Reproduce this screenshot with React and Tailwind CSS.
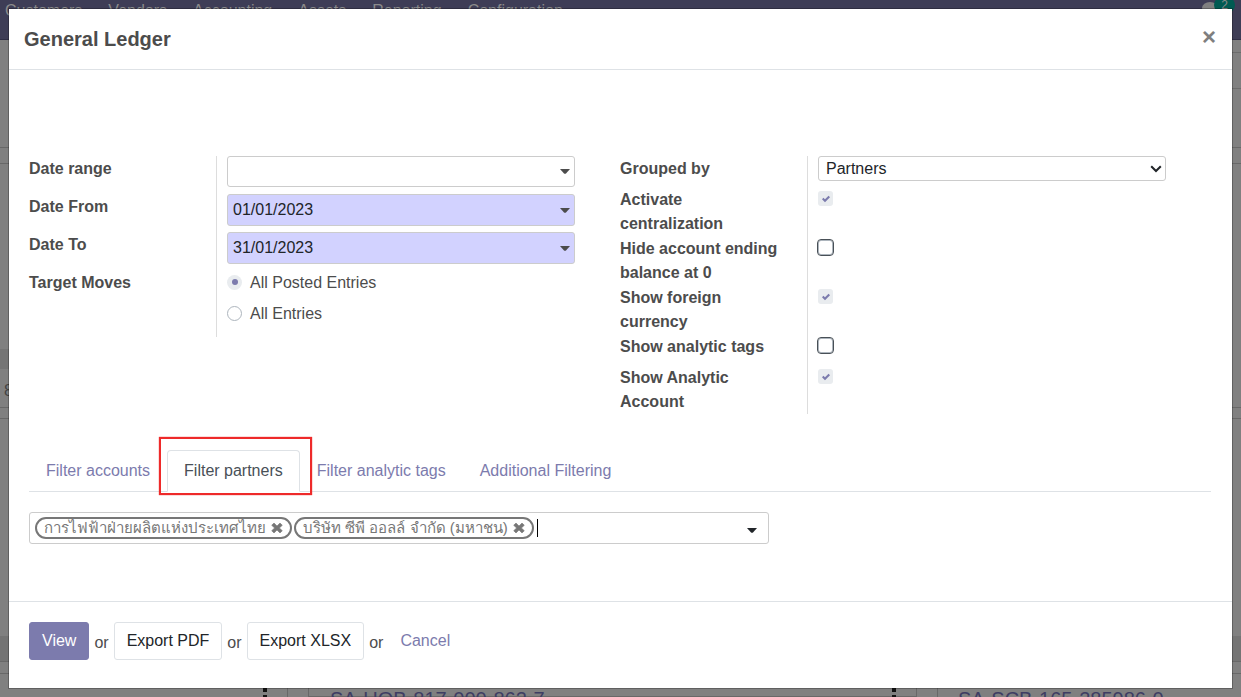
import React from "react";

const NAV = ["Customers", "Vendors", "Accounting", "Assets", "Reporting", "Configuration"];

const OPTIONS = [
  { id: "centralize", label: "Activate centralization", checked: true },
  { id: "hide-zero", label: "Hide account ending balance at 0", checked: false },
  { id: "foreign", label: "Show foreign currency", checked: true },
  { id: "tags", label: "Show analytic tags", checked: false },
  { id: "analytic", label: "Show Analytic Account", checked: true },
];

const TABS = ["Filter accounts", "Filter partners", "Filter analytic tags", "Additional Filtering"];

const PARTNERS = ["การไฟฟ้าฝ่ายผลิตแห่งประเทศไทย", "บริษัท ซีพี ออลล์ จำกัด (มหาชน)"];

function Caret({ className = "" }) {
  return (
    <svg viewBox="0 0 10 5" className={"h-[5px] w-[10px] shrink-0 " + className} aria-hidden="true">
      <path d="M0 0h10L6 4.4Q5 5 4 4.4z" fill="currentColor" />
    </svg>
  );
}

function Cross({ className = "" }) {
  return (
    <svg viewBox="0 0 12 12" className={"h-3 w-3 " + className} aria-hidden="true">
      <path
        d="M3 1 6 4 9 1 11.3 3.3 8.4 6l2.9 2.7L9 11 6 8 3 11 .7 8.7 3.6 6 .7 3.3z"
        fill="currentColor"
        stroke="currentColor"
        strokeWidth="0.6"
        strokeLinejoin="round"
      />
    </svg>
  );
}

function DateField({ id, label, value, required }) {
  return (
    <div className="flex h-[38px]">
      <div className="w-[187px] shrink-0 pt-px">
        <label htmlFor={id} className="font-bold leading-6">{label}</label>
      </div>
      <div className="flex-1 border-l border-[#ddd] pl-[10px]">
        <div
          className={
            "flex items-center rounded-[3px] border border-[#ccc] pr-1 " +
            (required ? "h-8 bg-[#d2d2ff]" : "h-[31px] bg-white")
          }
        >
          <input
            id={id}
            type="text"
            defaultValue={value}
            className="min-w-0 flex-1 bg-transparent px-[5px] text-[#212529] outline-none"
          />
          <Caret />
        </div>
      </div>
    </div>
  );
}

function Check({ id, checked }) {
  return (
    <span className="grid w-[15px] place-items-center pt-1">
      <input
        id={id}
        type="checkbox"
        defaultChecked={checked}
        className={
          "col-start-1 row-start-1 appearance-none " +
          (checked
            ? "h-[15px] w-[15px] rounded-[3px] bg-[#e9ecef]"
            : "-m-px h-[17px] w-[17px] rounded-[4px] border border-[#495057] bg-white shadow-[inset_0_0_0_1px_#adb5bd]")
        }
      />
      {checked && (
        <svg viewBox="0 0 8 8" className="pointer-events-none col-start-1 row-start-1 h-2 w-2" aria-hidden="true">
          <path d="M6.564.75l-3.59 3.612-1.538-1.55L0 4.26 2.974 7.25 8 2.193z" fill="#7c7bad" />
        </svg>
      )}
    </span>
  );
}

function Radio({ id, label, checked }) {
  return (
    <div className="flex h-6 items-center gap-2">
      <span className="grid place-items-center">
        <input
          id={id}
          type="radio"
          name="target"
          defaultChecked={checked}
          className={
            "col-start-1 row-start-1 h-[15px] w-[15px] appearance-none rounded-full " +
            (checked ? "bg-[#e9ecef]" : "border border-[#adb5bd] bg-white")
          }
        />
        {checked && <span className="pointer-events-none col-start-1 row-start-1 h-[6px] w-[6px] rounded-full bg-[#7c7bad]" />}
      </span>
      <label htmlFor={id} className="pt-px">{label}</label>
    </div>
  );
}

function Dots() {
  return (
    <svg viewBox="0 0 4 18" className="h-[18px] w-1 text-[#111]" aria-hidden="true">
      <path d="M0 0h4v4H0zM0 7h4v4H0zM0 14h4v4H0z" fill="currentColor" />
    </svg>
  );
}

function Backdrop() {
  return (
    <div className="flex h-full flex-col overflow-hidden bg-[#808080]" aria-hidden="true">
      <div className="flex h-10 shrink-0 justify-between border-b border-[#2f2e45] bg-[#3e3d56] pl-[5px] pr-[6px] text-[#8b8b8b]">
        <div className="flex h-[22px] items-center gap-[26px]">
          {NAV.map((n) => (
            <span key={n}>{n}</span>
          ))}
        </div>
        <div className="flex items-start">
          <span className="mt-[2px] h-3 w-4 rounded-[50%] bg-[#808080]" />
          <span className="-ml-1 h-4 w-[21px] -translate-y-[3px] rounded-full bg-[#005a52] text-center text-xs leading-4">2</span>
        </div>
      </div>
      <div className="ml-3 h-[13px] shrink-0 border-b border-[#6c6c6c]" />
      <div className="ml-3 h-9 shrink-0 border-b border-[#6c6c6c]" />
      <div className="h-[59px] shrink-0 border-b border-[#686868]" />
      <div className="h-4 shrink-0 border-b border-[#686868]" />
      <div className="flex h-[244px] shrink-0 flex-col justify-end border-b border-[#686868]">
        <div className="h-5 w-3 bg-[#757575]" />
        <div className="flex h-[38px] items-center pl-1 pt-[5px] text-[#444]">8</div>
      </div>
      <div className="h-[11px] shrink-0 border-b border-[#686868]" />
      <div className="flex h-[243px] shrink-0 flex-col justify-end border-b border-[#686868]">
        <div className="h-[25px] bg-[#747474]" />
      </div>
      <div className="flex min-h-0 flex-1 gap-5 pt-[11px] text-xl text-[#3e3d63]">
        <div className="flex w-[288px] shrink-0 justify-end border-r border-t border-[#686868] pr-5 pt-[14px]">
          <Dots />
        </div>
        <div className="flex w-[609px] shrink-0 justify-between border border-[#686868] pl-[21px] pr-5 pt-[14px]">
          <span className="-mt-[3px]">SA-UOB-817-000-862-7</span>
          <Dots />
        </div>
        <div className="flex-1 whitespace-nowrap border-l border-t border-[#686868] pl-5 pt-[11px]">
          SA-SCB-165-285986-0
        </div>
      </div>
    </div>
  );
}

export default function App() {
  return (
    <div className="relative min-h-screen overflow-hidden font-['Liberation_Sans','Noto_Sans',sans-serif] text-base leading-6 text-[#4c4c4c]">
      <div className="absolute inset-0">
        <Backdrop />
      </div>

      <div className="relative p-[9px]">
        <section
          role="dialog"
          aria-labelledby="title"
          className="bg-white shadow-[0_0_0_1px_rgba(0,0,0,0.25)]"
        >
          <header className="flex h-[61px] items-center justify-between border-b border-[#dee2e6] px-[15px]">
            <h1 id="title" className="text-xl font-bold">General Ledger</h1>
            <button type="button" aria-label="Close" className="mb-1 mr-px text-[24px] font-bold text-[#7f7f7f]">
              ×
            </button>
          </header>

          <div className="pb-[57px] pl-5 pr-[21px] pt-[86px]">
            <div className="grid grid-cols-2 items-start">
              <div className="pr-[45px]">
                <DateField id="range" label="Date range" value="" />
                <DateField id="from" label="Date From" value="01/01/2023" required />
                <DateField id="to" label="Date To" value="31/01/2023" required />
                <div className="flex">
                  <div className="w-[187px] shrink-0 pt-px font-bold">Target Moves</div>
                  <div className="flex flex-1 flex-col gap-[7px] border-l border-[#ddd] pb-3 pl-[10px]">
                    <Radio id="posted" label="All Posted Entries" checked />
                    <Radio id="all" label="All Entries" />
                  </div>
                </div>
              </div>

              <div className="pr-[45px]">
                <div className="flex h-[31px]">
                  <div className="w-[187px] shrink-0 pt-px">
                    <label htmlFor="group" className="font-bold">Grouped by</label>
                  </div>
                  <div className="flex-1 border-l border-[#ddd] pl-[10px]">
                    <div className="grid items-center">
                      <select
                        id="group"
                        className="col-start-1 row-start-1 h-[25px] w-full appearance-none rounded-[3px] border border-[#ccc] bg-white pl-[7px] text-[#212529]"
                      >
                        <option>Partners</option>
                      </select>
                      <svg
                        viewBox="0 0 12 8"
                        className="pointer-events-none col-start-1 row-start-1 mr-1 h-2 w-3 justify-self-end"
                        aria-hidden="true"
                      >
                        <path d="M1.2 1.2 6 6l4.8-4.8" fill="none" stroke="#212529" strokeWidth="2" />
                      </svg>
                    </div>
                  </div>
                </div>
                {OPTIONS.map((o) => (
                  <div key={o.id} className="flex min-h-[31px]">
                    <div className="w-[187px] shrink-0 pr-5 pt-px">
                      <label htmlFor={o.id} className="block font-bold">{o.label}</label>
                    </div>
                    <div className="flex flex-1 items-start border-l border-[#ddd] pl-[10px]">
                      <Check id={o.id} checked={o.checked} />
                    </div>
                  </div>
                ))}
              </div>
            </div>

            <div role="tablist" className="mt-9 flex border-b border-[#dee2e6]">
              {TABS.map((t) =>
                t === "Filter partners" ? (
                  <button
                    key={t}
                    type="button"
                    role="tab"
                    aria-selected="true"
                    className="relative -mb-px rounded-t border border-b-white border-[#dee2e6] px-4 py-2 text-[#495057]"
                  >
                    {t}
                    <span className="pointer-events-none absolute -bottom-1 -left-[9px] -right-[13px] -top-[14px] border-2 border-[#ee2a2a] shadow-[0_0_1px_#ee2a2a]" />
                  </button>
                ) : (
                  <button key={t} type="button" role="tab" aria-selected="false" className="px-[17px] pb-2 pt-[9px] text-[#7c7bad]">
                    {t}
                  </button>
                )
              )}
            </div>

            <div className="mt-5 flex h-8 w-full max-w-[740px] items-center gap-[2px] rounded-[3px] border border-[#ccc] pl-[5px] pr-[11px]">
              {PARTNERS.map((p) => (
                <span
                  key={p}
                  className="flex h-[22px] items-center gap-[5px] whitespace-nowrap rounded-full border-2 border-[#777] px-[7px] text-[15px] text-[#777]"
                >
                  {p}
                  <button type="button" aria-label={"Remove " + p}>
                    <Cross />
                  </button>
                </span>
              ))}
              <input
                type="text"
                aria-label="Partners"
                className="ml-px h-[18px] min-w-0 flex-1 border-l border-black bg-transparent outline-none"
              />
              <Caret className="mt-1 text-[#212529]" />
            </div>
          </div>

          <footer className="flex items-center gap-[5px] border-t border-[#dee2e6] px-5 pb-7 pt-5">
            <button type="button" className="h-[38px] rounded-[3px] border border-[#7c7bad] bg-[#7c7bad] px-3 text-white">
              View
            </button>
            <span className="pt-1">or</span>
            <button type="button" className="h-[38px] rounded-[3px] border border-[#dee2e6] px-3 text-[#212529]">
              Export PDF
            </button>
            <span className="pt-1">or</span>
            <button type="button" className="h-[38px] rounded-[3px] border border-[#dee2e6] px-3 text-[#212529]">
              Export XLSX
            </button>
            <span className="pt-1">or</span>
            <button type="button" className="h-[38px] px-3 text-[#7c7bad]">Cancel</button>
          </footer>
        </section>
      </div>
    </div>
  );
}
